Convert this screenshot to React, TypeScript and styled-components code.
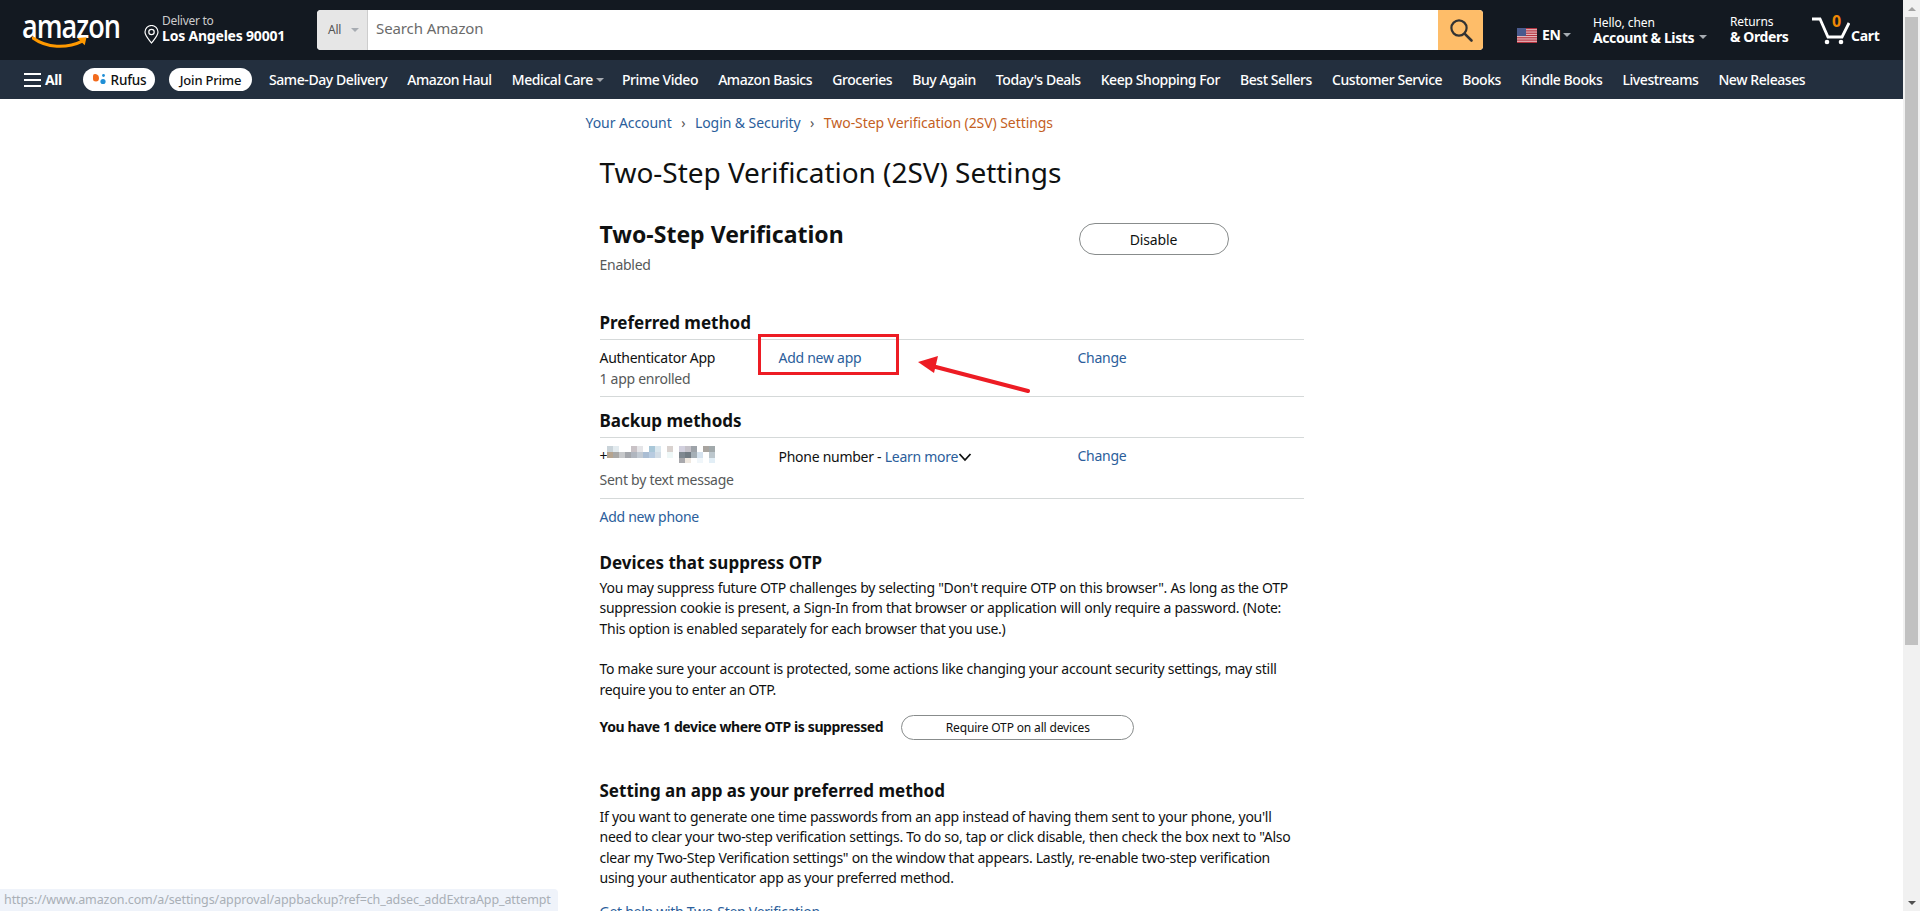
import React from "react";
import styled, { createGlobalStyle } from "styled-components";

const Global = createGlobalStyle`
  html, body { margin: 0; padding: 0; height: 100%; overflow: hidden; background: #fff; }
  body { font-family: "Noto Sans", "Liberation Sans", Arial, sans-serif; font-size: 14px; line-height: 20px; color: #0f1111; letter-spacing: -0.27px; }
  * { box-sizing: border-box; }
`;

const Shell = styled.div`display: flex; height: 911px; overflow: hidden; position: relative;`;
const PageCol = styled.div`flex: 1; min-width: 0; overflow: hidden; height: 911px;`;
const ScrollTrack = styled.div`
  width: 17px; height: 911px; background: #f1f1f1; display: flex; flex-direction: column; align-items: center;
`;
const ScrollArrow = styled.div<{ $down?: boolean }>`
  height: 17px; width: 17px; display: flex; align-items: center; justify-content: center; flex: none;
  margin-top: ${p => (p.$down ? "auto" : "0")};
  &::after {
    content: ""; border-left: 4px solid transparent; border-right: 4px solid transparent;
    ${p => (p.$down ? "border-top: 4px solid #505050;" : "border-bottom: 4px solid #a3a3a3;")}
  }
`;
const ScrollThumb = styled.div`width: 13px; height: 628px; background: #c1c1c1;`;

const TopBar = styled.header`
  height: 60px; background: #131921; color: #fff; display: flex; align-items: center; padding-left: 22px;
`;
const LogoWrap = styled.div`position: relative; width: 100px; height: 40px; flex: none; margin-top: -3px;`;
const LogoText = styled.span`
  display: block; font-family: "Open Sans", sans-serif; font-weight: 600; font-size: 33px; letter-spacing: -1.2px; line-height: 34px; color: #fff;
  transform: scaleX(0.82); transform-origin: left center;
`;
const LogoSmile = styled.svg`position: absolute; left: 10px; top: 27px;`;
const Deliver = styled.div`display: flex; align-items: flex-end; margin-left: 22px; width: 156px; flex: none; gap: 3px; margin-bottom: 3px;`;
const DeliverText = styled.div`display: flex; flex-direction: column;`;
const TinyLine = styled.span`font-size: 12px; line-height: 14px; color: #ccc;`;
const BoldLine = styled.span`font-size: 14px; line-height: 16px; font-weight: 700; color: #fff; white-space: nowrap; letter-spacing: -0.2px;`;
const Search = styled.div`
  width: 1166px; height: 40px; margin-left: 17px; flex: none; display: flex; border-radius: 4px; overflow: hidden; background: #fff;
`;
const SearchCat = styled.div`
  width: 51px; background: #e6e6e6; border-right: 1px solid #cdcdcd; color: #555; font-size: 12px; display: flex; align-items: center; padding-left: 11px; gap: 10px;
`;
const Caret = styled.i<{ $c?: string }>`
  display: inline-block; width: 0; height: 0; border-left: 4px solid transparent; border-right: 4px solid transparent;
  border-top: 4px solid ${p => p.$c || "#a7acb2"};
`;
const SearchInput = styled.div`flex: 1; padding-left: 8px; font-size: 15px; line-height: 37px; color: #6b6b6b; letter-spacing: -0.1px;`;
const SearchBtn = styled.div`width: 45px; background: #febd69; display: flex; align-items: center; justify-content: center;`;
const Lang = styled.div`display: flex; align-items: center; margin-left: 34px; width: 76px; flex: none; padding-top: 10px;`;
const LangText = styled.span`font-weight: 700; font-size: 14px; margin: 0 2px 0 5px;`;
const Account = styled.div`display: flex; flex-direction: column; width: 137px; flex: none; padding-bottom: 1px;`;
const HelloLine = styled.span`font-size: 12px; line-height: 15px; color: #fff; letter-spacing: -0.1px;`;
const AccountLine = styled.span`font-size: 14px; line-height: 15px; font-weight: 700; color: #fff; display: flex; align-items: center; gap: 5px; white-space: nowrap; letter-spacing: -0.4px;`;
const Returns = styled.div`display: flex; flex-direction: column; width: 82px; flex: none; padding-bottom: 2px;`;
const Cart = styled.div`display: flex; align-items: flex-end; position: relative; padding-top: 2px;`;
const CartCount = styled.span`position: absolute; left: 20px; top: -3px; color: #f08804; font-weight: 700; font-size: 16px; line-height: 18px;`;
const CartLabel = styled.span`font-weight: 700; font-size: 14px; line-height: 16px; margin-left: 1px; margin-bottom: 1px;`;

const NavBar = styled.nav`
  height: 39px; background: #232f3e; color: #fff; display: flex; align-items: center; padding-left: 24px; white-space: nowrap; font-size: 14px; letter-spacing: -0.42px;
`;
const Burger = styled.div`display: flex; align-items: center; gap: 4px; font-weight: 700; width: 59px; flex: none;`;
const Pill = styled.div<{ $w: number; $fs: number }>`
  width: ${p => p.$w}px; height: 23px; border-radius: 12px; background: #fff; color: #0f1111; display: flex; align-items: center; justify-content: center; font-size: ${p => p.$fs}px; font-weight: 500;
  gap: 4px; flex: none; margin-right: 14px; letter-spacing: -0.2px;
`;
const NavLinks = styled.div`display: flex; align-items: center; gap: 20px; margin-left: 3px;`;
const NavLink = styled.span`display: inline-flex; align-items: center; gap: 3px; font-weight: 500;`;
const NavCaret = styled(Caret)`margin-right: -2px;`;

const Main = styled.main`width: 734px; margin: 0 auto; `;
const Crumbs = styled.div`display: flex; align-items: center; height: 48px; font-size: 14px; color: #555; padding-left: 1px; letter-spacing: -0.07px;`;
const Link = styled.a`color: #2b5e9b; text-decoration: none;`;
const CrumbSep = styled.span`margin: 0 9.5px; color: #555;`;
const CrumbNow = styled.span`color: #c45f1f;`;
const Inner = styled.div`padding: 0 15px;`;
const H1 = styled.h1`font-size: 28px; line-height: 36px; font-weight: 400; margin: 7px 0 0; letter-spacing: -0.04px;`;
const Status = styled.div`display: flex; margin-top: 28px; height: 67px;`;
const StatusLeft = styled.div`width: 479px; flex: none;`;
const H2 = styled.h2`font-size: 23px; line-height: 32px; font-weight: 700; margin: 0 0 5px; letter-spacing: 0;`;
const Muted = styled.div`color: #565959;`;
const PillBtn = styled.button<{ $w: number; $h: number; $fs: number; $top?: number }>`
  width: ${p => p.$w}px; height: ${p => p.$h}px; font-size: ${p => p.$fs}px; border: 1px solid #888c8c; border-radius: 100px; background: #fff; color: #0f1111;
  font-family: inherit; padding: 0; flex: none; letter-spacing: -0.15px; margin-top: ${p => p.$top || 0}px;
`;
const H3 = styled.h3<{ $top: number }>`font-size: 17px; line-height: 24px; font-weight: 700; margin: ${p => p.$top}px 0 0; letter-spacing: 0;`;
const Row = styled.div<{ $h: number }>`
  position: relative; display: flex; border-top: 1px solid #d5d9d9; height: ${p => p.$h}px; padding-top: 8px; margin-top: 4px;
`;
const RuleEnd = styled.div`border-top: 1px solid #d5d9d9;`;
const Col1 = styled.div`width: 179px; flex: none;`;
const Col2 = styled.div`width: 299px; flex: none; display: flex; align-items: flex-start;`;
const Col3 = styled.div`flex: 1;`;
const SubLine = styled.div`color: #565959; margin-top: 1px;`;
const PhoneLine = styled.div`display: flex; align-items: flex-start; height: 23px;`;
const PhoneText = styled.span`margin-top: 1px;`;
const Chevron = styled.svg`margin-top: 4px;`;
const RedBox = styled.div`position: absolute; left: 158px; top: -6px; width: 141px; height: 41px; border: 3px solid #ed1c24;`;
const RedArrow = styled.svg`position: absolute; left: 316px; top: 15px;`;
const Blur = styled.svg`display: block;`;
const SingleLink = styled.div`margin-top: 8px;`;
const Para = styled.p<{ $top: number }>`margin: ${p => p.$top}px 0 0; font-size: 14px; line-height: 20.4px; color: #0f1111;`;
const OtpRow = styled.div`display: flex; align-items: center; margin-top: 15px; height: 24px; gap: 18px;`;
const OtpLabel = styled.b`font-weight: 700; white-space: nowrap; letter-spacing: -0.39px;`;
const StatusTip = styled.div`
  position: absolute; left: 0; bottom: 0; height: 22px; width: 558px; padding-left: 4px; background: #eff3fa; border-top-right-radius: 4px;
  font-size: 12.5px; line-height: 22px; color: #a9afb6; white-space: nowrap; overflow: hidden; letter-spacing: -0.1px;
`;

const mosaic: [number, number, string][] = [
  [0,0,"#c9d3d9"],[6,0,"#e3ebef"],[24,0,"#c9c2c6"],[30,0,"#e5e5e8"],[42,0,"#a9c7d8"],[48,0,"#dbe7ee"],[60,0,"#d9d2cf"],[72,0,"#d2d0de"],[78,0,"#c5c2c9"],[84,0,"#9ea3a9"],[96,0,"#a8a49f"],[102,0,"#a1a9ab"],
  [0,6,"#b5a48f"],[6,6,"#a8a8a6"],[12,6,"#c6c8ca"],[18,6,"#a3a6ab"],[24,6,"#b0b6bf"],[30,6,"#c2cad3"],[36,6,"#aabdd3"],[42,6,"#b8cbe0"],[48,6,"#d3dde6"],[60,6,"#eef7f7"],[72,6,"#7f8890"],[78,6,"#727b83"],[84,6,"#a5afb6"],[90,6,"#d5e2ee"],[102,6,"#bcc7cd"],
  [72,12,"#a8a8ac"],[78,12,"#efe8e0"],[90,12,"#f0f6fa"],[102,12,"#e2eef6"],
];

const navItems = ["Same-Day Delivery","Amazon Haul","Medical Care","Prime Video","Amazon Basics","Groceries","Buy Again","Today's Deals","Keep Shopping For","Best Sellers","Customer Service","Books","Kindle Books","Livestreams","New Releases"];

export default function App() {
  return (
    <Shell>
      <Global />
      <PageCol>
        <TopBar>
          <LogoWrap>
            <LogoText>amazon</LogoText>
            <LogoSmile width="60" height="15" viewBox="0 0 66 16">
              <path d="M1 2 C16 13 38 14 56 5" fill="none" stroke="#ff9900" strokeWidth="3.4" strokeLinecap="round" />
              <path d="M50 2 L60 1 L58 10 Z" fill="#ff9900" />
            </LogoSmile>
          </LogoWrap>
          <Deliver>
            <svg width="15" height="19" viewBox="0 0 15 19">
              <path d="M7.5 18 C4 13.5 1 10.5 1 7 a6.5 6.5 0 0 1 13 0 C14 10.5 11 13.5 7.5 18 Z" fill="none" stroke="#fff" strokeWidth="1.2" />
              <circle cx="7.5" cy="7" r="2.7" fill="none" stroke="#fff" strokeWidth="1.2" />
            </svg>
            <DeliverText>
              <TinyLine>Deliver to</TinyLine>
              <BoldLine>Los Angeles 90001</BoldLine>
            </DeliverText>
          </Deliver>
          <Search>
            <SearchCat>All <Caret /></SearchCat>
            <SearchInput>Search Amazon</SearchInput>
            <SearchBtn>
              <svg width="26" height="26" viewBox="0 0 26 26" fill="none" stroke="#333" strokeWidth="2.2">
                <circle cx="11" cy="11" r="7.6" />
                <path d="M16.6 16.6 L23.5 23.5" strokeLinecap="round" strokeWidth="2.6" />
              </svg>
            </SearchBtn>
          </Search>
          <Lang>
            <svg width="20" height="15" viewBox="0 0 20 15">
              <rect width="20" height="15" fill="#e8c4c8" />
              {[0, 2.3, 4.6, 6.9, 9.2, 11.5, 13.8].map(y => <rect key={y} y={y} width="20" height="1.2" fill="#b5333f" />)}
              <rect width="9" height="8" fill="#4a5a8e" />
            </svg>
            <LangText>EN</LangText>
            <Caret />
          </Lang>
          <Account>
            <HelloLine>Hello, chen</HelloLine>
            <AccountLine>Account &amp; Lists <Caret /></AccountLine>
          </Account>
          <Returns>
            <HelloLine>Returns</HelloLine>
            <AccountLine>&amp; Orders</AccountLine>
          </Returns>
          <Cart>
            <svg width="38" height="28" viewBox="0 0 38 28" fill="none">
              <path d="M0 2 H8 L16 20 H30 L37 6" stroke="#fff" strokeWidth="2.8" />
              <circle cx="15" cy="25" r="2.3" fill="#fff" />
              <circle cx="29" cy="25" r="2.3" fill="#fff" />
            </svg>
            <CartCount>0</CartCount>
            <CartLabel>Cart</CartLabel>
          </Cart>
        </TopBar>
        <NavBar>
          <Burger>
            <svg width="17" height="14" viewBox="0 0 17 14" fill="#fff">
              <rect width="17" height="2" /><rect y="6" width="17" height="2" /><rect y="12" width="17" height="2" />
            </svg>
            All
          </Burger>
          <Pill $w={72} $fs={13.5}>
            <svg width="15" height="14" viewBox="0 0 15 14">
              <path d="M1 3 Q1 0.5 3.5 1 L5 1.5 Q7 2 7 5 Q7 8.5 4 8.5 Q1 8.5 1 6 Z" fill="#f26b1d" />
              <circle cx="11.5" cy="2.5" r="1.4" fill="#1f8fd6" />
              <circle cx="11" cy="8.5" r="2.6" fill="#1f8fd6" />
            </svg>
            Rufus
          </Pill>
          <Pill $w={83} $fs={13}>Join Prime</Pill>
          <NavLinks>
            {navItems.map(n => (
              <NavLink key={n}>{n}{n === "Medical Care" && <NavCaret />}</NavLink>
            ))}
          </NavLinks>
        </NavBar>
        <Main>
          <Crumbs>
            <Link>Your Account</Link><CrumbSep>›</CrumbSep>
            <Link>Login &amp; Security</Link><CrumbSep>›</CrumbSep>
            <CrumbNow>Two-Step Verification (2SV) Settings</CrumbNow>
          </Crumbs>
          <Inner>
            <H1>Two-Step Verification (2SV) Settings</H1>
            <Status>
              <StatusLeft>
                <H2>Two-Step Verification</H2>
                <Muted>Enabled</Muted>
              </StatusLeft>
              <PillBtn $w={150} $h={32} $fs={14} $top={5}>Disable</PillBtn>
            </Status>
            <H3 $top={26}>Preferred method</H3>
            <Row $h={57}>
              <Col1>
                <div>Authenticator App</div>
                <SubLine>1 app enrolled</SubLine>
              </Col1>
              <Col2><Link>Add new app</Link></Col2>
              <Col3><Link>Change</Link></Col3>
              <RedBox />
              <RedArrow width="116" height="40" viewBox="0 0 116 40">
                <path d="M112 36 L16 11" fill="none" stroke="#ed1c24" strokeWidth="4" strokeLinecap="round" />
                <path d="M2 7 L22 1 L18 18 Z" fill="#ed1c24" />
              </RedArrow>
            </Row>
            <RuleEnd />
            <H3 $top={12}>Backup methods</H3>
            <Row $h={61}>
              <Col1>
                <PhoneLine>
                  <span>+</span>
                  <Blur width="108" height="17" viewBox="0 0 108 17">
                    {mosaic.map(([x, y, c]) => <rect key={`${x}-${y}`} x={x} y={y} width="6" height="6" fill={c} />)}
                  </Blur>
                </PhoneLine>
                <SubLine>Sent by text message</SubLine>
              </Col1>
              <Col2>
                <PhoneText>Phone number - <Link>Learn more</Link></PhoneText>
                <Chevron width="14" height="14" viewBox="0 0 14 14" fill="none" stroke="#0f1111" strokeWidth="1.8">
                  <path d="M1.5 4 L7 10 L12.5 4" />
                </Chevron>
              </Col2>
              <Col3><Link>Change</Link></Col3>
            </Row>
            <RuleEnd />
            <SingleLink><Link>Add new phone</Link></SingleLink>
            <H3 $top={24}>Devices that suppress OTP</H3>
            <Para $top={3}>
              You may suppress future OTP challenges by selecting "Don't require OTP on this browser". As long as the OTP suppression cookie is present, a Sign-In from that browser or application will only require a password. (Note: This option is enabled separately for each browser that you use.)
            </Para>
            <Para $top={20}>
              To make sure your account is protected, some actions like changing your account security settings, may still require you to enter an OTP.
            </Para>
            <OtpRow>
              <OtpLabel>You have 1 device where OTP is suppressed</OtpLabel>
              <PillBtn $w={233} $h={25} $fs={12}>Require OTP on all devices</PillBtn>
            </OtpRow>
            <H3 $top={40}>Setting an app as your preferred method</H3>
            <Para $top={4}>
              If you want to generate one time passwords from an app instead of having them sent to your phone, you'll need to clear your two-step verification settings. To do so, tap or click disable, then check the box next to "Also clear my Two-Step Verification settings" on the window that appears. Lastly, re-enable two-step verification using your authenticator app as your preferred method.
            </Para>
            <Para $top={13}><Link>Get help with Two-Step Verification</Link></Para>
          </Inner>
        </Main>
      </PageCol>
      <ScrollTrack>
        <ScrollArrow />
        <ScrollThumb />
        <ScrollArrow $down />
      </ScrollTrack>
      <StatusTip>https://www.amazon.com/a/settings/approval/appbackup?ref=ch_adsec_addExtraApp_attempt</StatusTip>
    </Shell>
  );
}
